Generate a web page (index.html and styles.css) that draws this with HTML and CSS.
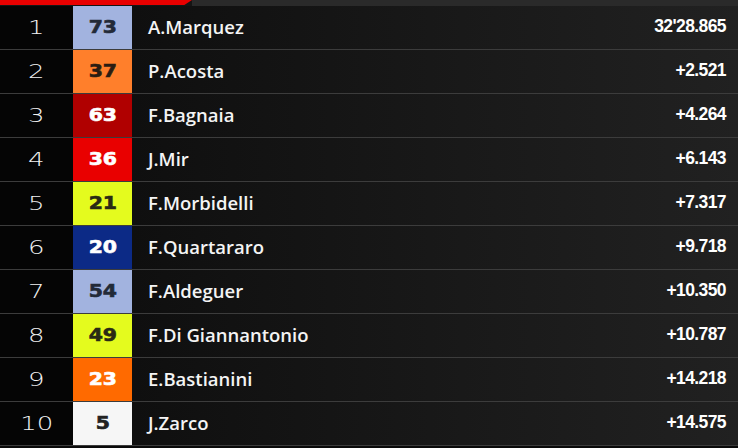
FILE: index.html
```html
<!DOCTYPE html>
<html>
<head>
<meta charset="utf-8">
<link rel="stylesheet" href="styles.css">
</head>
<body>
<div class="board">
  <div class="topbar"><div class="topbar-red"></div><div class="topbar-dark"></div></div>
  <div class="row"><div class="pos"><span>1</span></div><div class="num num-lav"><span>73</span></div><div class="info"><span class="name">A.Marquez</span><span class="time">32'28.865</span></div></div>
  <div class="row"><div class="pos"><span>2</span></div><div class="num num-orange"><span>37</span></div><div class="info"><span class="name">P.Acosta</span><span class="time">+2.521</span></div></div>
  <div class="row"><div class="pos"><span>3</span></div><div class="num num-darkred"><span>63</span></div><div class="info"><span class="name">F.Bagnaia</span><span class="time">+4.264</span></div></div>
  <div class="row"><div class="pos"><span>4</span></div><div class="num num-red"><span>36</span></div><div class="info"><span class="name">J.Mir</span><span class="time">+6.143</span></div></div>
  <div class="row"><div class="pos"><span>5</span></div><div class="num num-yellow"><span>21</span></div><div class="info"><span class="name">F.Morbidelli</span><span class="time">+7.317</span></div></div>
  <div class="row"><div class="pos"><span>6</span></div><div class="num num-navy"><span>20</span></div><div class="info"><span class="name">F.Quartararo</span><span class="time">+9.718</span></div></div>
  <div class="row"><div class="pos"><span>7</span></div><div class="num num-lav"><span>54</span></div><div class="info"><span class="name">F.Aldeguer</span><span class="time">+10.350</span></div></div>
  <div class="row"><div class="pos"><span>8</span></div><div class="num num-yellow"><span>49</span></div><div class="info"><span class="name">F.Di Giannantonio</span><span class="time">+10.787</span></div></div>
  <div class="row"><div class="pos"><span>9</span></div><div class="num num-orange2"><span>23</span></div><div class="info"><span class="name">E.Bastianini</span><span class="time">+14.218</span></div></div>
  <div class="row"><div class="pos"><span>10</span></div><div class="num num-white"><span>5</span></div><div class="info"><span class="name">J.Zarco</span><span class="time">+14.575</span></div></div>
</div>
</body>
</html>
```
FILE: styles.css
```css
html, body {
  margin: 0;
  padding: 0;
  background: #0a0a0a;
}
.board {
  width: 738px;
  height: 448px;
  overflow: hidden;
  background: #0a0a0a;
}
.topbar {
  display: flex;
  height: 6px;
  background: #151515;
}
.topbar-red {
  width: 192px;
  height: 5px;
  background: #e80000;
  clip-path: polygon(0 0, 100% 0, 96% 100%, 0 100%);
}
.topbar-dark {
  flex: 1;
  height: 6px;
  background: #2a2a2a;
}
.row {
  display: grid;
  grid-template-columns: 73px 59px 1fr;
  height: 43px;
  border-bottom: 1px solid #3c3c3c;
}
.pos {
  background: #050505;
  color: #f2f2f2;
  font-family: "DejaVu Sans", sans-serif;
  font-weight: 300;
  font-size: 20px;
  display: flex;
  align-items: center;
  justify-content: center;
  padding-bottom: 2px;
}
.pos span {
  display: inline-block;
  transform: scaleX(1.3);
}
.num {
  display: flex;
  align-items: center;
  justify-content: center;
  font-family: "DejaVu Sans", sans-serif;
  font-weight: 700;
  font-size: 17px;
  color: #222;
  padding-bottom: 1px;
}
.num span {
  display: inline-block;
  transform: scaleX(1.2);
  -webkit-text-stroke: 0.6px currentColor;
}
.num-lav { background: #a2b3df; color: #232a38; }
.num-orange { background: #ff7f2b; color: #2a1c12; }
.num-darkred { background: #b00000; color: #fff; }
.num-red { background: #e90000; color: #fff; }
.num-yellow { background: #e4fb1e; color: #2a2a14; }
.num-navy { background: #0c2a86; color: #fff; }
.num-orange2 { background: #ff6a00; color: #fff; }
.num-white { background: #f6f6f6; color: #222; }
.info {
  display: flex;
  align-items: center;
  justify-content: space-between;
  padding: 0 12px 2px 16px;
  background: linear-gradient(to right, #0f0f0f, #1a1a1a 60%, #212121);
}
.name {
  color: #f4f4f4;
  font-family: "Open Sans", sans-serif;
  font-weight: 600;
  font-size: 18.5px;
  letter-spacing: 0;
}
.time {
  color: #ffffff;
  font-family: "Liberation Sans", sans-serif;
  font-weight: 700;
  font-size: 17.5px;
  letter-spacing: -0.6px;
}
```
